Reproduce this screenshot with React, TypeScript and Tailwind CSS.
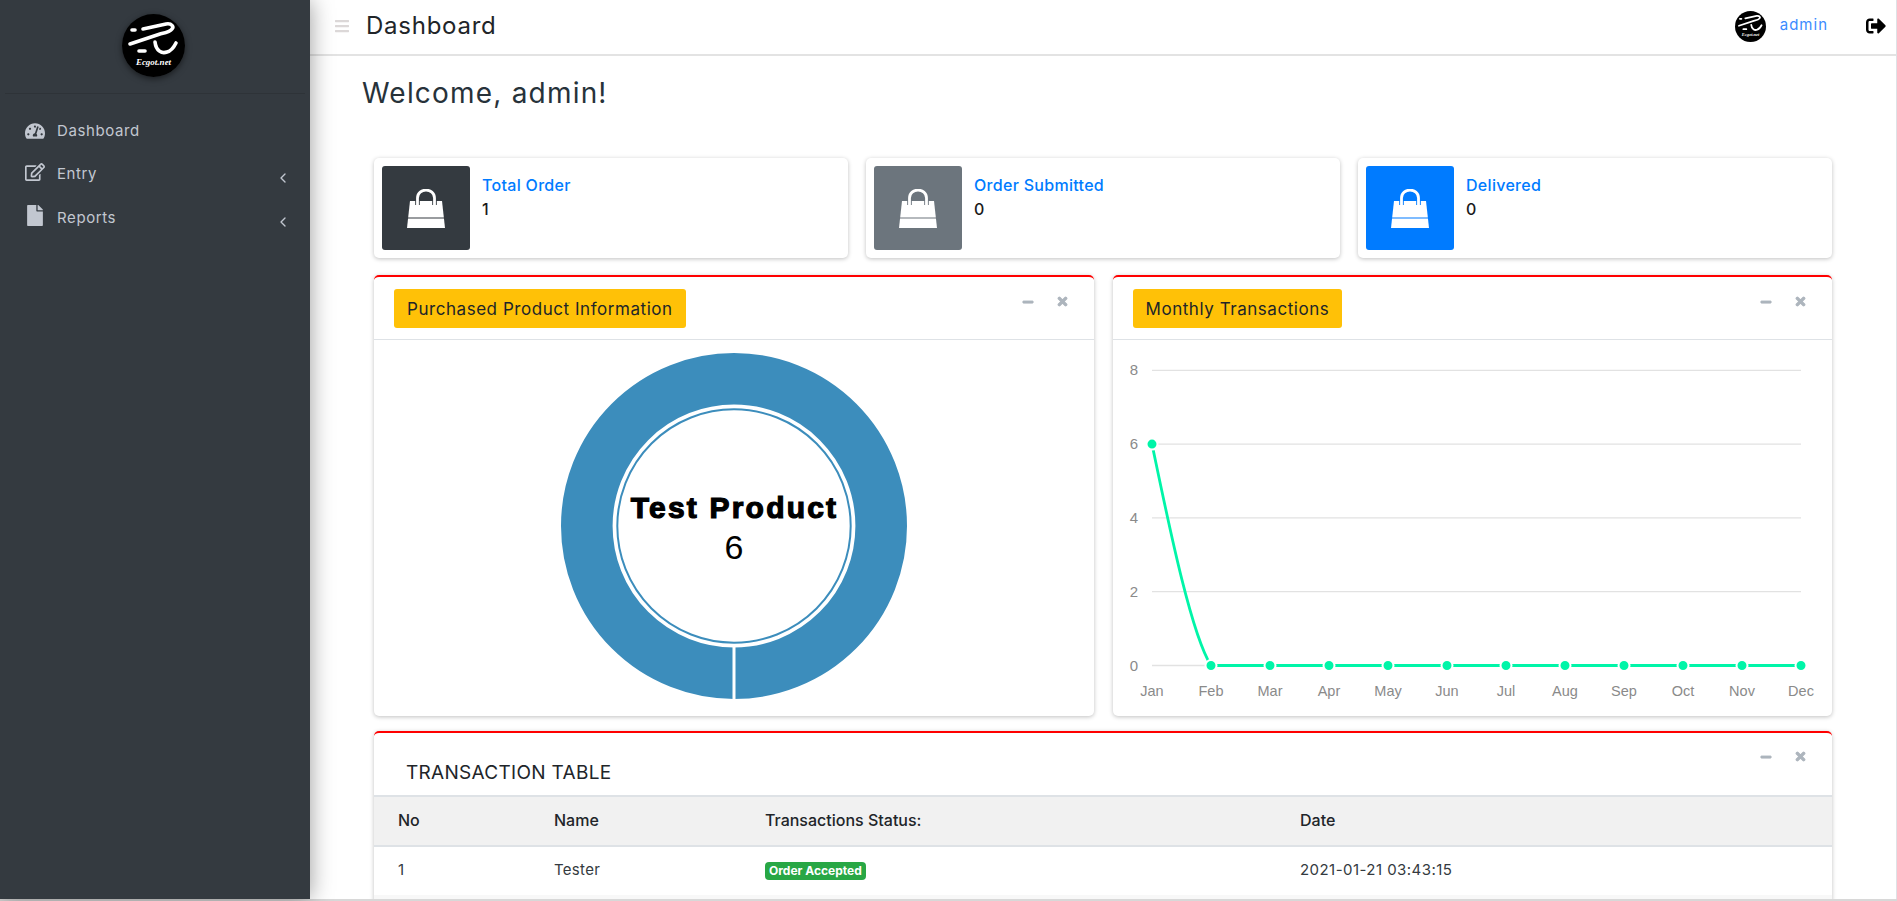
import React from "react";
import { FaTachometerAlt, FaRegEdit, FaFile, FaBars, FaSignOutAlt, FaMinus, FaTimes } from "react-icons/fa";
import { ChevronLeft } from "lucide-react";

function Logo({ size }: { size: number }) {
  return (
    <svg width={size} height={size} viewBox="0 0 63 63" className="block shrink-0">
      <circle cx="31.5" cy="31.5" r="31.5" fill="#000" />
      <g fill="none" stroke="#fff" strokeLinecap="round" strokeWidth="3.6">
        <path d="M21 15 L44 10 C50 9 52 13 50 15 C48 18 42 19 38 20 L8 30" />
        <path d="M33 28 C34 37 40 40 45 38 C49 37 52 33 54 29" />
        <path d="M10 16 L13 16" />
        <path d="M17 37 L23 37" />
      </g>
      <text x="31.5" y="51" textAnchor="middle" fontSize="9" fontStyle="italic" fill="#fff" fontFamily="'Liberation Serif', serif" fontWeight="700">
        Ecgot.net
      </text>
    </svg>
  );
}

function Bag() {
  return (
    <svg width="38" height="39" viewBox="0 0 38 39" className="block">
      <path d="M3 12 H35 L38 39 H0 Z" fill="#fff" />
      <path d="M10.5 16 V12" stroke="currentColor" strokeWidth="4.6" />
      <path d="M27.5 16 V12" stroke="currentColor" strokeWidth="4.6" />
      <path d="M10.5 16 V9 C10.5 -1.5 27.5 -1.5 27.5 9 V16" fill="none" stroke="#fff" strokeWidth="2.8" strokeLinecap="round" />
      <path d="M0.5 29 H37.5" stroke="currentColor" strokeWidth="1.2" />
    </svg>
  );
}

function StatCard({ title, value, bg }: { title: string; value: string; bg: string }) {
  return (
    <div className="flex h-[100px] rounded-[5px] bg-white p-2 shadow-[0_1px_4px_rgba(0,0,0,0.25)]">
      <div className={`flex h-[84px] w-[88px] items-center justify-center rounded-[3px] ${bg}`}>
        <Bag />
      </div>
      <div className="pl-[12px] pt-[8px]">
        <div className="text-[16px] leading-[22px] font-medium tracking-[0.3px] text-[#007bff]">{title}</div>
        <div className="mt-[2px] text-[16px] leading-[22px] font-medium text-[#1a1a1a]">{value}</div>
      </div>
    </div>
  );
}

function Tools() {
  return (
    <div className="flex items-center gap-[22px] text-[#adb5bd]">
      <FaMinus size={12} stroke="currentColor" strokeWidth={30} />
      <FaTimes size={13} stroke="currentColor" strokeWidth={40} />
    </div>
  );
}

function ChartPanel({ title, children }: { title: string; children: React.ReactNode }) {
  return (
    <div className="h-[441px] rounded-[5px] border-t-2 border-[#ff0000] bg-white shadow-[0_1px_4px_rgba(0,0,0,0.25)]">
      <div className="flex h-[63px] items-start justify-between border-b border-[#dee2e6] pl-[20px] pr-[25px] pt-[12px]">
        <div className="flex h-[39px] items-center rounded-[3px] bg-[#ffc107] px-[13px] pt-[3px] text-[17px] tracking-[0.55px] text-[#212529]">{title}</div>
        <div className="pt-[6px]">
          <Tools />
        </div>
      </div>
      {children}
    </div>
  );
}

function Donut() {
  return (
    <div className="flex justify-center pt-[12px]">
      <svg width="348" height="348" viewBox="0 0 348 348" className="block">
        <circle cx="174" cy="174" r="147.2" fill="none" stroke="#3c8dbc" strokeWidth="51.6" />
        <circle cx="174" cy="174" r="116.7" fill="none" stroke="#3c8dbc" strokeWidth="2" />
        <path d="M174 295 V348" stroke="#fff" strokeWidth="3" />
        <text x="174.5" y="166" textAnchor="middle" fontFamily="'Liberation Sans', Arial, sans-serif" fontWeight="700" fontSize="30" fill="#000" stroke="#000" strokeWidth="1.2" letterSpacing="2.2">
          Test Product
        </text>
        <text x="174" y="207" textAnchor="middle" fontFamily="'Liberation Sans', Arial, sans-serif" fontSize="34" fill="#000">
          6
        </text>
      </svg>
    </div>
  );
}

const months = ["Jan", "Feb", "Mar", "Apr", "May", "Jun", "Jul", "Aug", "Sep", "Oct", "Nov", "Dec"];

function LineChart() {
  const x0 = 39;
  const step = 59;
  const yOf = (v: number) => 30.3 + (8 - v) * 36.9;
  return (
    <svg width="718" height="376" viewBox="0 0 718 376" className="block">
      {[8, 6, 4, 2, 0].map((v) => (
        <g key={v}>
          <line x1={x0} x2={x0 + 11 * step} y1={yOf(v)} y2={yOf(v)} stroke="#e2e2e2" strokeWidth="1.3" />
          <text x="25" y={yOf(v) + 5} textAnchor="end" fontSize="15" fill="#8a8a8a" fontFamily="'Liberation Sans', Arial, sans-serif">
            {v}
          </text>
        </g>
      ))}
      <path
        d={`M${x0} ${yOf(6)} C${x0 + 14} ${yOf(4.2)} ${x0 + 38} ${yOf(0.9)} ${x0 + step} ${yOf(0)} L${x0 + 11 * step} ${yOf(0)}`}
        fill="none"
        stroke="#00f5a8"
        strokeWidth="2.8"
      />
      {months.map((m, i) => (
        <g key={m}>
          <circle cx={x0 + i * step} cy={yOf(i === 0 ? 6 : 0)} r="5.5" fill="#00f5a8" stroke="#fff" strokeWidth="2" />
          <text x={x0 + i * step} y={yOf(0) + 30} textAnchor="middle" fontSize="14.5" fill="#8a8a8a" fontFamily="'Liberation Sans', Arial, sans-serif">
            {m}
          </text>
        </g>
      ))}
    </svg>
  );
}

function NavItem({ icon, label, caret, iconClass }: { icon: React.ReactNode; label: string; caret?: boolean; iconClass?: string }) {
  return (
    <div className="flex h-[43.7px] items-center pl-[25px] pr-[19px] text-[#c2c7d0]">
      <span className={`flex w-[20px] justify-center ${iconClass ?? ""}`}>{icon}</span>
      <span className="ml-[12px] flex-1 text-[15px] tracking-[0.6px]">{label}</span>
      {caret && (
        <span className="mt-[7px]">
          <ChevronLeft size={16} strokeWidth={2} />
        </span>
      )}
    </div>
  );
}

export default function App() {
  return (
    <div className="flex h-[901px] w-[1897px] flex-col overflow-hidden bg-white font-['Inter',sans-serif] text-[#212529]">
      <div className="flex h-[899px] min-h-0">
        <aside className="relative z-10 flex w-[310px] shrink-0 flex-col bg-[#343a40] shadow-[0_0_22px_rgba(0,0,0,0.4)]">
          <div className="mx-[5px] flex h-[94px] items-start justify-center border-b border-[#2e3338] pr-[3px] pt-[14px]">
            <div className="rounded-full shadow-[0_2px_6px_rgba(0,0,0,0.5)]">
              <Logo size={63} />
            </div>
          </div>
          <nav className="mt-[15px] flex flex-col">
            <NavItem icon={<FaTachometerAlt size={20} />} label="Dashboard" />
            <NavItem icon={<FaRegEdit size={20} />} label="Entry" caret iconClass="-mt-[6px]" />
            <NavItem icon={<FaFile size={21} />} label="Reports" caret iconClass="-mt-[6px]" />
          </nav>
        </aside>

        <main className="flex min-w-0 flex-1 flex-col border-r border-[#dee2e6]">
          <header className="flex h-[56px] shrink-0 items-center border-b-2 border-[#e3e3e3] pb-[2px] pl-[24px] pr-[10px]">
            <FaBars size={16} className="text-[#dcd8d8]" />
            <h1 className="ml-[16px] text-[24px] tracking-[0.75px] text-[#212529]">Dashboard</h1>
            <div className="ml-auto flex items-center">
              <Logo size={31} />
              <span className="-mt-[2px] ml-[14px] text-[15px] tracking-[1px] text-[#3b8bff]">admin</span>
              <FaSignOutAlt size={20} className="ml-[38px] text-black" />
            </div>
          </header>

          <div className="min-h-0 flex-1 overflow-hidden pl-[64px] pr-[64px]">
            <h2 className="-ml-[12px] mt-[16px] text-[28px] leading-[42px] tracking-[1.2px] text-[#27323a]">Welcome, admin!</h2>
            <div className="mt-[44px] grid grid-cols-3 gap-[18px]">
              <StatCard title="Total Order" value="1" bg="bg-[#343a40] text-[#343a40]" />
              <StatCard title="Order Submitted" value="0" bg="bg-[#6c757d] text-[#6c757d]" />
              <StatCard title="Delivered" value="0" bg="bg-[#007bff] text-[#007bff]" />
            </div>
            <div className="mt-[17px] grid grid-cols-2 gap-[19px]">
              <ChartPanel title="Purchased Product Information">
                <Donut />
              </ChartPanel>
              <ChartPanel title="Monthly Transactions">
                <LineChart />
              </ChartPanel>
            </div>
            <section className="mt-[15px] h-[190px] rounded-t-[5px] border-t-2 border-[#ff0000] bg-white shadow-[0_1px_4px_rgba(0,0,0,0.25)]">
              <div className="flex h-[62px] items-start justify-between pl-[32px] pr-[25px]">
                <div className="pt-[27px] text-[19px] leading-[26px] tracking-[0.3px] text-[#212529]">TRANSACTION TABLE</div>
                <div className="pt-[17px]">
                  <Tools />
                </div>
              </div>
              <table className="w-full table-fixed border-collapse text-left text-[15px] text-[#343a40]">
                <thead>
                  <tr className="h-[50px] border-y-2 border-[#dee2e6] bg-[#f1f1f1] text-[16px] text-[#212529]">
                    <th className="w-[180px] pb-[2px] pl-[24px] font-medium">No</th>
                    <th className="w-[211px] pb-[2px] font-medium">Name</th>
                    <th className="w-[535px] pb-[2px] font-medium">Transactions Status:</th>
                    <th className="pb-[2px] font-medium">Date</th>
                  </tr>
                </thead>
                <tbody>
                  <tr className="h-[49px]">
                    <td className="pb-[2px] pl-[24px]">1</td>
                    <td className="pb-[2px] tracking-[0.3px]">Tester</td>
                    <td className="pb-[1px]">
                      <span className="inline-block rounded-[4px] bg-[#28a745] px-[4px] text-[12px] leading-[18px] font-bold text-white">Order Accepted</span>
                    </td>
                    <td className="pb-[2px] tracking-[0.45px]">2021-01-21 03:43:15</td>
                  </tr>
                </tbody>
              </table>
              <div className="h-[40px] bg-[#f8f8f8]" />
            </section>
          </div>
        </main>
      </div>
      <div className="h-[2px] shrink-0 bg-[#d8d8d8]" />
    </div>
  );
}
